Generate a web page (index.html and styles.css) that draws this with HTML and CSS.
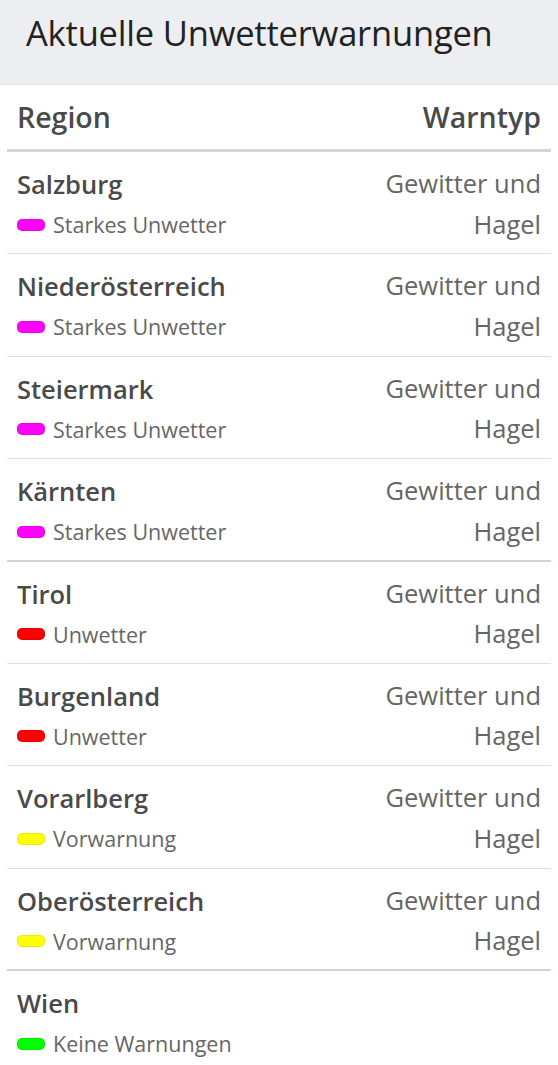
FILE: index.html
```html
<!DOCTYPE html>
<html lang="de">
<head>
    <meta charset="UTF-8">
    <meta name="viewport" content="width=device-width, initial-scale=1.0">
    <title>Aktuelle Unwetterwarnungen</title>
    <link rel="stylesheet" href="styles.css">
</head>
<body>

    <div class="header">
        <h1>Aktuelle Unwetterwarnungen</h1>
    </div>

    <div class="content">
        <table class="warnings">
            <thead>
                <tr>
                    <th class="col-region">Region</th>
                    <th class="col-type">Warntyp</th>
                </tr>
            </thead>
            <tbody>
                <tr>
                    <td><div class="name">Salzburg</div><div class="level"><span class="badge severe"></span>Starkes Unwetter</div></td>
                    <td class="type">Gewitter und<br>Hagel</td>
                </tr>
                <tr>
                    <td><div class="name">Niederösterreich</div><div class="level"><span class="badge severe"></span>Starkes Unwetter</div></td>
                    <td class="type">Gewitter und<br>Hagel</td>
                </tr>
                <tr>
                    <td><div class="name">Steiermark</div><div class="level"><span class="badge severe"></span>Starkes Unwetter</div></td>
                    <td class="type">Gewitter und<br>Hagel</td>
                </tr>
                <tr class="last">
                    <td><div class="name">Kärnten</div><div class="level"><span class="badge severe"></span>Starkes Unwetter</div></td>
                    <td class="type">Gewitter und<br>Hagel</td>
                </tr>
                <tr>
                    <td><div class="name">Tirol</div><div class="level"><span class="badge warn"></span>Unwetter</div></td>
                    <td class="type">Gewitter und<br>Hagel</td>
                </tr>
                <tr>
                    <td><div class="name">Burgenland</div><div class="level"><span class="badge warn"></span>Unwetter</div></td>
                    <td class="type">Gewitter und<br>Hagel</td>
                </tr>
                <tr>
                    <td><div class="name">Vorarlberg</div><div class="level"><span class="badge pre"></span>Vorwarnung</div></td>
                    <td class="type">Gewitter und<br>Hagel</td>
                </tr>
                <tr class="last">
                    <td><div class="name">Oberösterreich</div><div class="level"><span class="badge pre"></span>Vorwarnung</div></td>
                    <td class="type">Gewitter und<br>Hagel</td>
                </tr>
                <tr class="none">
                    <td><div class="name">Wien</div><div class="level"><span class="badge ok"></span>Keine Warnungen</div></td>
                    <td class="type"></td>
                </tr>
            </tbody>
        </table>
    </div>

</body>
</html>
```

FILE: styles.css
```css
body { margin: 0; font-family: "Open Sans", Arial, sans-serif; background: #fff; }
.header {
    height: 84px;
    background-color: #eceef1;
    border-bottom: 1px solid #dde0e4;
    display: flex;
    align-items: center;
    padding: 0 26px;
}
h1 {
    margin: 0 0 20px;
    font-size: 34.5px;
    font-weight: 400;
    letter-spacing: -0.2px;
    color: #222;
}
.content { padding: 0 7px; }
.warnings {
    width: 100%;
    border-collapse: collapse;
}
th {
    height: 64px;
    padding: 0 10px;
    font-size: 28.5px;
    font-weight: 600;
    color: #4a4a4a;
    border-bottom: 3px solid #d3d7dd;
}
.col-region { text-align: left; }
.col-type { text-align: right; }
td {
    padding: 11px 10px 9.4px;
    vertical-align: top;
    border-bottom: 1px solid #e0e0e0;
}
tr.last td {
    padding-bottom: 8.4px;
    border-bottom: 2px solid #cfd4da;
}
tr.none td { border-bottom: none; }
.name {
    font-size: 25.5px;
    line-height: 42px;
    font-weight: 600;
    color: #4a4a4a;
}
.level {
    display: flex;
    align-items: center;
    gap: 8px;
    font-size: 21.5px;
    line-height: 39px;
    color: #666;
}
/* warning level pills */
.badge {
    width: 28px;
    height: 12px;
    border-radius: 5px;
    box-sizing: border-box;
    border: 1px solid rgba(0, 0, 0, 0.08);
}
.severe { background-color: #ff00ff; }
.warn { background-color: #ff0000; }
.pre { background-color: #ffff00; }
.ok { background-color: #00ff00; }
.type {
    text-align: right;
    font-size: 25.5px;
    line-height: 40.5px;
    color: #666;
}
```
